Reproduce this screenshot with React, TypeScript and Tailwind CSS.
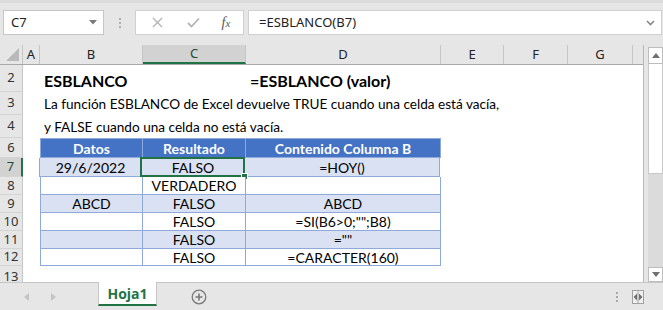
import React from "react";

function RowHead({ n, sel }: { n: string; sel?: boolean }) {
  return (
    <div
      className={
        "w-[23px] shrink-0 flex items-center justify-center border-b border-[#d4d4d4] text-[13px] font-['Noto_Sans',sans-serif] " +
        (sel
          ? "bg-[#d2d2d2] text-[#1e4d33] border-r-2 border-r-[#217346]"
          : "bg-[#e6e6e6] text-[#333] border-r border-r-[#c6c6c6]")
      }
    >
      {n}
    </div>
  );
}

type TRow = { n: string; b: string; c: string; d: string; band: boolean; sel?: boolean; h: string };

const rows: TRow[] = [
  { n: "7", b: "29/6/2022", c: "FALSO", d: "=HOY()", band: true, sel: true, h: "h-[19px]" },
  { n: "8", b: "", c: "VERDADERO", d: "", band: false, h: "h-[18px]" },
  { n: "9", b: "ABCD", c: "FALSO", d: "ABCD", band: true, h: "h-[18px]" },
  { n: "10", b: "", c: "FALSO", d: "=SI(B6>0;\"\";B8)", band: false, h: "h-[18px]" },
  { n: "11", b: "", c: "FALSO", d: "=\"\"", band: true, h: "h-[18px]" },
  { n: "12", b: "", c: "FALSO", d: "=CARACTER(160)", band: false, h: "h-[17px]" },
];

export default function App() {
  const cellFont = "font-['Lato',sans-serif]";
  return (
    <div className="w-[663px] h-[310px] bg-[#e6e6e6] flex flex-col overflow-hidden font-['Noto_Sans',sans-serif] text-[#222]">
      {/* toolbar */}
      <div className="h-[45px] shrink-0 flex items-start pt-[10px] pl-[3px] border-t-[3px] border-[#dcdcdc]">
        <div className="w-[101px] h-[25px] -mt-[3px] bg-white border border-[#c6c6c6] flex items-center justify-between pl-[7px] pr-[6px]">
          <span className="text-[13px] text-[#222]">C7</span>
          <svg width="8" height="5" viewBox="0 0 8 5"><path d="M0 0 H8 L4 4.5 Z" fill="#7a7a7a" /></svg>
        </div>
        <div className="w-[31px] h-[25px] -mt-[3px] flex flex-col items-center justify-center gap-[2px]">
          <div className="w-[2px] h-[2px] bg-[#b0b0b0]" />
          <div className="w-[2px] h-[2px] bg-[#b0b0b0]" />
          <div className="w-[2px] h-[2px] bg-[#b0b0b0]" />
        </div>
        <div className="w-[109px] h-[25px] -mt-[3px] bg-white border border-[#d0d0d0] flex items-center">
          <div className="w-[36px] flex justify-center ml-[3px]">
            <svg width="11" height="11" viewBox="0 0 11 11"><path d="M1 1 L10 10 M10 1 L1 10" stroke="#b4b4b4" strokeWidth="1.4" /></svg>
          </div>
          <div className="w-[36px] flex justify-center">
            <svg width="13" height="11" viewBox="0 0 13 11"><path d="M1 6 L4.5 9.5 L12 1.5" stroke="#b4b4b4" strokeWidth="1.8" fill="none" /></svg>
          </div>
          <div className="w-[30px] flex justify-center">
            <span className="font-['Liberation_Serif',serif] italic text-[14px] text-[#555] leading-none">
              f<span className="text-[11px]">x</span>
            </span>
          </div>
        </div>
        <div className="ml-[4px] w-[414px] h-[25px] -mt-[3px] bg-white border border-[#d0d0d0] flex items-center justify-between pl-[10px] pr-[6px]">
          <span className="text-[13px] text-[#222]">=ESBLANCO(B7)</span>
          <svg width="9" height="6" viewBox="0 0 9 6"><path d="M1 1 L4.5 4.5 L8 1" stroke="#888" strokeWidth="1.6" fill="none" /></svg>
        </div>
      </div>

      {/* main */}
      <div className="h-[237px] shrink-0 flex">
        <div className="w-[644px] shrink-0 flex flex-col bg-white border-r border-[#b8b8b8]">
          {/* column headers */}
          <div className="h-[20px] shrink-0 flex bg-[#e6e6e6] border-b border-[#a8a8a8] text-[13px] text-[#222]">
            <div className="w-[23px] shrink-0 relative border-r border-[#c6c6c6]">
              <svg className="absolute right-[3px] bottom-[3px]" width="13" height="13" viewBox="0 0 13 13"><path d="M13 0 V13 H0 Z" fill="#b9b9b9" /></svg>
            </div>
            <div className="w-[17px] shrink-0 flex items-center justify-center border-r border-[#c6c6c6]">A</div>
            <div className="w-[103px] shrink-0 flex items-center justify-center border-r border-[#c6c6c6]">B</div>
            <div className="w-[103px] shrink-0 flex items-center justify-center bg-[#d2d2d2] text-[#1e4d33] border-b-2 border-[#217346] border-r border-r-[#c6c6c6]">C</div>
            <div className="w-[195px] shrink-0 flex items-center justify-center border-r border-[#c6c6c6]">D</div>
            <div className="w-[63px] shrink-0 flex items-center justify-center border-r border-[#c6c6c6]">E</div>
            <div className="w-[64px] shrink-0 flex items-center justify-center border-r border-[#c6c6c6]">F</div>
            <div className="w-[65px] shrink-0 flex items-center justify-center border-r border-[#c6c6c6]">G</div>
            <div className="flex-1" />
          </div>

          {/* row 2 */}
          <div className="h-[27px] shrink-0 flex">
            <RowHead n="2" />
            <div className={"flex items-center font-bold text-[16px] text-black " + cellFont}>
              <div className="w-[17px]" />
              <div className="w-[206px] pl-[4px] pt-[5px]">ESBLANCO</div>
              <div className="pl-[4px] pt-[5px] whitespace-nowrap">=ESBLANCO (valor)</div>
            </div>
          </div>
          {/* row 3 */}
          <div className="h-[23px] shrink-0 flex">
            <RowHead n="3" />
            <div className={"flex items-center text-[13.6px] text-black whitespace-nowrap pl-[21px] pt-[1px] " + cellFont}>
              La función ESBLANCO de Excel devuelve TRUE cuando una celda está vacía,
            </div>
          </div>
          {/* row 4 */}
          <div className="h-[23px] shrink-0 flex">
            <RowHead n="4" />
            <div className={"flex items-center text-[13.6px] text-black whitespace-nowrap pl-[21px] pt-[1px] " + cellFont}>
              y FALSE cuando una celda no está vacía.
            </div>
          </div>
          {/* row 6 header */}
          <div className="h-[20px] shrink-0 flex">
            <RowHead n="6" />
            <div className={"flex text-[14px] font-bold text-white " + cellFont}>
              <div className="w-[17px]" />
              <div className="w-[103px] bg-[#4472c4] border border-[#8eaadb] flex items-center justify-center">Datos</div>
              <div className="w-[103px] bg-[#4472c4] border-y border-r border-[#8eaadb] flex items-center justify-center">Resultado</div>
              <div className="w-[195px] bg-[#4472c4] border-y border-r border-[#8eaadb] flex items-center justify-center">Contenido Columna B</div>
            </div>
          </div>
          {rows.map((r) => (
            <div key={r.n} className={r.h + " shrink-0 flex"}>
              <RowHead n={r.n} sel={r.sel} />
              <div className={"flex text-[14px] text-black " + cellFont}>
                <div className={r.sel ? "w-[16px]" : "w-[17px]"} />
                <div className={"w-[103px] border-l border-b border-r border-[#8eaadb] flex items-center justify-center " + (r.band ? "bg-[#d9e1f2]" : "bg-white")}>{r.b}</div>
                <div className={"w-[103px] relative border-b border-r border-[#8eaadb] flex items-center justify-center " + (r.band ? "bg-[#d9e1f2]" : "bg-white")}>
                  {r.c}
                  {r.sel && (
                    <>
                      <div className="absolute -left-[2px] -top-[1px] -right-[1px] -bottom-[1px] border-2 border-[#217346]" />
                      <div className="absolute -right-[4px] -bottom-[4px] w-[7px] h-[7px] bg-[#217346] border border-white" />
                    </>
                  )}
                </div>
                <div className={"w-[195px] border-b border-r border-[#8eaadb] flex items-center justify-center " + (r.band ? "bg-[#d9e1f2]" : "bg-white")}>{r.d}</div>
              </div>
            </div>
          ))}
          {/* row 13 */}
          <div className="flex-1 flex">
            <div className="w-[23px] shrink-0 flex items-start justify-center pt-[1px] bg-[#e6e6e6] border-r border-[#c6c6c6] text-[13px] text-[#333]">13</div>
          </div>
        </div>
        <div className="w-[4px] shrink-0" />
        {/* scrollbar */}
        <div className="w-[15px] shrink-0 flex flex-col pt-[2px]">
          <div className="h-[17px] bg-white border border-[#bdbdbd] flex items-center justify-center">
            <svg width="8" height="5" viewBox="0 0 8 5"><path d="M0 5 H8 L4 0 Z" fill="#6f6f6f" /></svg>
          </div>
          <div className="h-[110px] bg-white border-x border-b border-[#c8c8c8]" />
          <div className="flex-1 bg-[#dbdbdb]" />
          <div className="h-[15px] bg-white border border-[#bdbdbd] flex items-center justify-center">
            <svg width="8" height="5" viewBox="0 0 8 5"><path d="M0 0 H8 L4 5 Z" fill="#6f6f6f" /></svg>
          </div>
        </div>
      </div>

      {/* sheet tabs */}
      <div className="h-[28px] shrink-0 flex items-start border-t border-[#c6c6c6] bg-[#e6e6e6]">
        <div className="w-[98px] h-[27px] flex items-center pl-[24px] gap-[22px]">
          <svg width="5" height="8" viewBox="0 0 5 8"><path d="M5 0 V8 L0 4 Z" fill="#c4c4c4" /></svg>
          <svg width="5" height="8" viewBox="0 0 5 8"><path d="M0 0 V8 L5 4 Z" fill="#c4c4c4" /></svg>
        </div>
        <div className="w-[59px] h-[24px] -mt-[1px] bg-white border-x border-[#c6c6c6] border-b-2 border-b-[#217346] flex items-center justify-center text-[14px] font-bold text-[#217346] font-['Open_Sans',sans-serif]">
          Hoja1
        </div>
        <div className="w-[83px] h-[27px] flex items-center justify-center">
          <svg width="16" height="16" viewBox="0 0 16 16">
            <circle cx="8" cy="8" r="6.8" stroke="#7a7a7a" strokeWidth="1.3" fill="none" />
            <path d="M8 4.5 V11.5 M4.5 8 H11.5" stroke="#7a7a7a" strokeWidth="1.6" />
          </svg>
        </div>
        <div className="flex-1" />
        <div className="h-[27px] flex items-center gap-[14px] pr-[19px]">
          <div className="flex flex-col gap-[2px]">
            <div className="w-[2px] h-[2px] bg-[#a8a8a8]" />
            <div className="w-[2px] h-[2px] bg-[#a8a8a8]" />
            <div className="w-[2px] h-[2px] bg-[#a8a8a8]" />
          </div>
          <svg width="12" height="14" viewBox="0 0 12 14">
            <rect x="0.5" y="0.5" width="11" height="13" fill="#f0f0f0" stroke="#a0a0a0" />
            <path d="M1.5 7 L5 3.5 V10.5 Z" fill="#707070" />
            <path d="M10.5 7 L7 3.5 V10.5 Z" fill="#707070" />
            <path d="M6 1 V13" stroke="#a0a0a0" />
          </svg>
        </div>
      </div>
    </div>
  );
}
